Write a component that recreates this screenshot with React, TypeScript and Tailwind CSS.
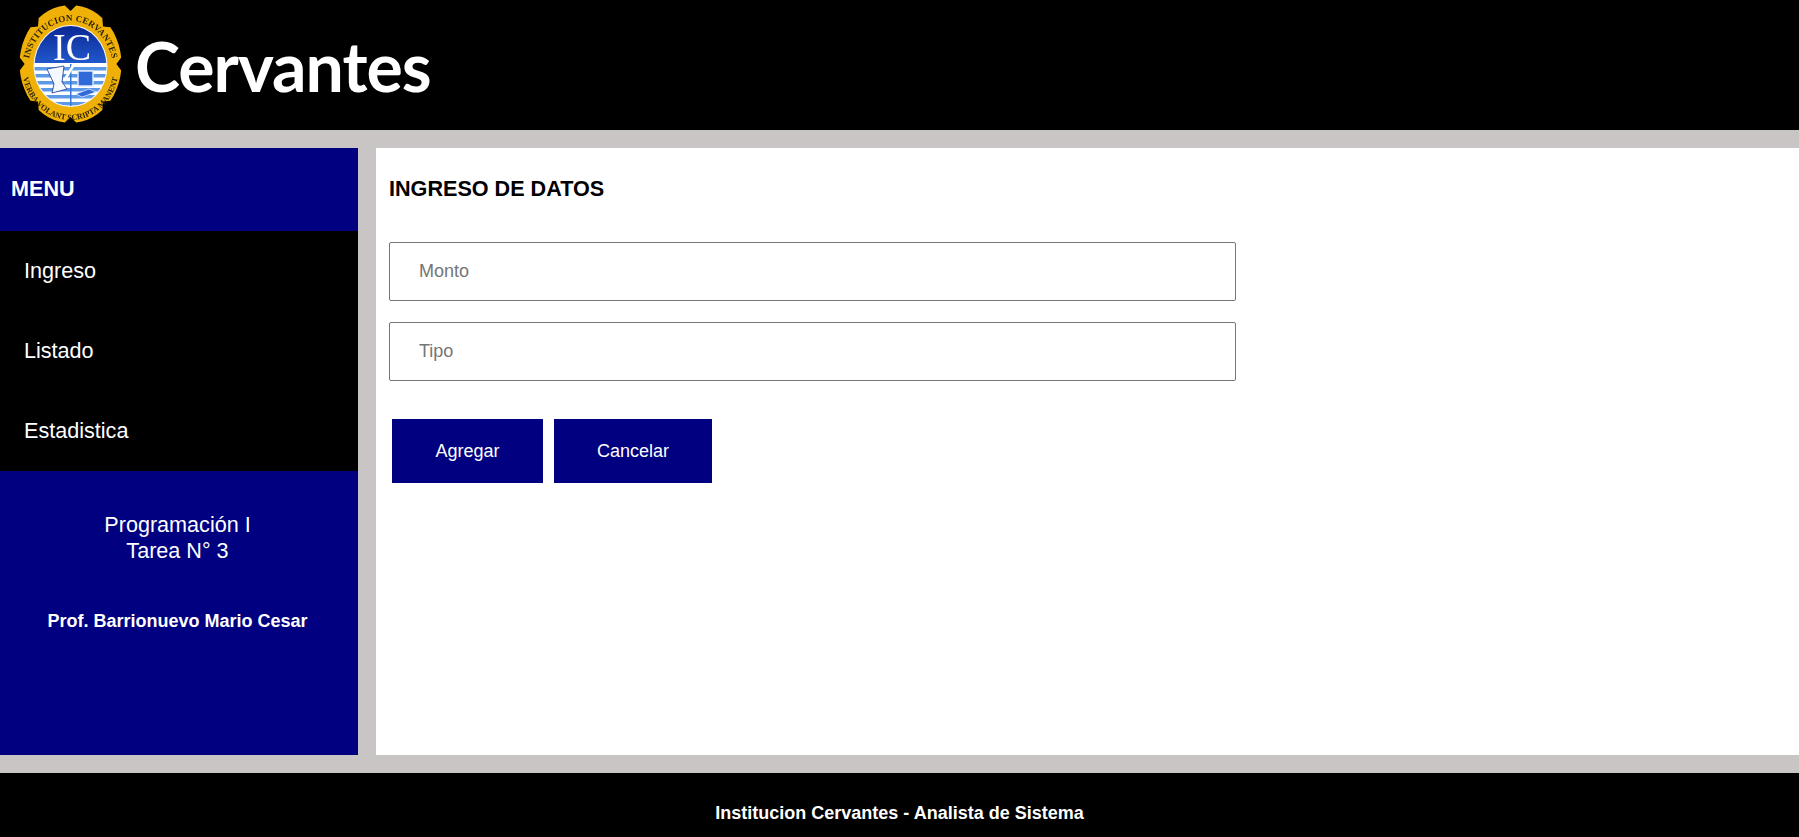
const navy = "bg-[#000080]";

function sealOutline() {
  const pts: string[] = [];
  const n = 56;
  for (let i = 0; i < n; i++) {
    const a = (i / n) * Math.PI * 2;
    const k = i % 7 === 0 ? 0.9 : 1;
    pts.push(`${(53.5 + 51 * k * Math.cos(a)).toFixed(1)},${(60 + 59 * k * Math.sin(a)).toFixed(1)}`);
  }
  return pts.join(" ");
}

function Seal() {
  return (
    <svg width="107" height="122" viewBox="0 0 107 122" className="shrink-0 blur-[0.35px]">
      <defs>
        <linearGradient id="sky" x1="0" y1="0" x2="0" y2="1">
          <stop offset="0" stopColor="#0a2490" />
          <stop offset="1" stopColor="#2058cc" />
        </linearGradient>
        <clipPath id="inner">
          <ellipse cx="53.5" cy="62" rx="36" ry="40" />
        </clipPath>
        <path id="topArc" d="M11 66 A 42.5 49 0 0 1 96 66" />
        <path id="bottomArc" d="M5 62 A 48.5 54 0 0 0 102 62" />
      </defs>
      <polygon points={sealOutline()} fill="#efb008" />
      <text fontFamily="Liberation Serif, serif" fontSize="9" fontWeight="700" fill="#2e2300" letterSpacing="0.2">
        <textPath href="#topArc" startOffset="50%" textAnchor="middle">
          INSTITUCION CERVANTES
        </textPath>
      </text>
      <text fontFamily="Liberation Serif, serif" fontSize="8" fontWeight="700" fill="#2e2300">
        <textPath href="#bottomArc" startOffset="50%" textAnchor="middle">
          VERBA VOLANT SCRIPTA MANENT
        </textPath>
      </text>
      <ellipse cx="53.5" cy="62" rx="37" ry="41" fill="#f5f5f5" />
      <g clipPath="url(#inner)">
        <rect x="10" y="20" width="90" height="39" fill="url(#sky)" />
        <rect x="10" y="59" width="90" height="45" fill="#ffffff" />
        {[63, 70, 77, 84, 91, 98].map((y) => (
          <rect key={y} x="10" y={y} width="90" height="3.5" fill="#5c9ae8" />
        ))}
        <rect x="53" y="60" width="1.5" height="44" fill="#3a78d8" />
        <path d="M30 65 L47 62 L45 78 L50 85 L35 89 L37 80 Z" fill="#f4f8ff" stroke="#17358f" strokeWidth="0.8" />
        <path d="M47 77 L56 62" stroke="#ffffff" strokeWidth="2.5" />
        <rect x="61" y="67" width="15" height="15" fill="#2f6ad8" stroke="#dce8ff" strokeWidth="1.5" />
        <path d="M59 90 L72 85 L79 88 L65 93 Z" fill="#2f6ad8" stroke="#dce8ff" strokeWidth="0.8" />
      </g>
      <text x="55" y="56" textAnchor="middle" fontFamily="Liberation Serif, serif" fontSize="38" fill="#ffffff">
        IC
      </text>
    </svg>
  );
}

export default function App() {
  return (
    <div className="flex h-[837px] flex-col overflow-hidden bg-[#c8c5c4] font-['Liberation_Sans',Arial,sans-serif]">
      <header className="flex h-[130px] shrink-0 items-center bg-black pl-[17px]">
        <Seal />
        <span className="ml-[11px] mt-[1px] font-['Lato',sans-serif] text-[68px] font-bold leading-none tracking-[-1px] text-white blur-[0.5px]">
          Cervantes
        </span>
      </header>

      <div className="mt-[18px] flex h-[607px] shrink-0 gap-[18px]">
        <aside className="flex w-[358px] shrink-0 flex-col">
          <div className={`flex h-[83px] items-center pl-[11px] text-[21.6px] font-bold text-white ${navy}`}>MENU</div>
          <nav className="flex h-[240px] flex-col bg-black text-[21.6px] text-white">
            {["Ingreso", "Listado", "Estadistica"].map((item) => (
              <a key={item} className="flex h-[80px] items-center pl-[24px]">
                {item}
              </a>
            ))}
          </nav>
          <div className={`flex flex-1 flex-col items-center pr-[3px] text-white ${navy}`}>
            <p className="mt-[41px] text-center text-[21.6px] leading-[26px]">
              Programación I
              <br />
              Tarea N° 3
            </p>
            <p className="mt-[44px] text-[18px] font-bold">Prof. Barrionuevo Mario Cesar</p>
          </div>
        </aside>

        <main className="flex-1 bg-white pl-[13px]">
          <h2 className="mt-[26px] text-[21.6px] font-bold leading-[30px] text-black">INGRESO DE DATOS</h2>
          <form className="mt-[38px] flex flex-col">
            <input
              placeholder="Monto"
              className="h-[59px] w-[847px] rounded-[2px] border border-[#767676] pl-[29px] text-[18px] outline-none placeholder:text-[#757575]"
            />
            <input
              placeholder="Tipo"
              className="mt-[21px] h-[59px] w-[847px] rounded-[2px] border border-[#767676] pl-[29px] text-[18px] outline-none placeholder:text-[#757575]"
            />
            <div className="mt-[38px] flex gap-[11px] pl-[3px]">
              <button type="button" className={`h-[64px] w-[151px] text-[18px] text-white ${navy}`}>
                Agregar
              </button>
              <button type="button" className={`h-[64px] w-[158px] text-[18px] text-white ${navy}`}>
                Cancelar
              </button>
            </div>
          </form>
        </main>
      </div>

      <footer className="mt-[18px] flex h-[64px] shrink-0 items-end justify-center bg-black pb-[10px] text-[18px] font-bold text-white">
        Institucion Cervantes - Analista de Sistema
      </footer>
    </div>
  );
}
